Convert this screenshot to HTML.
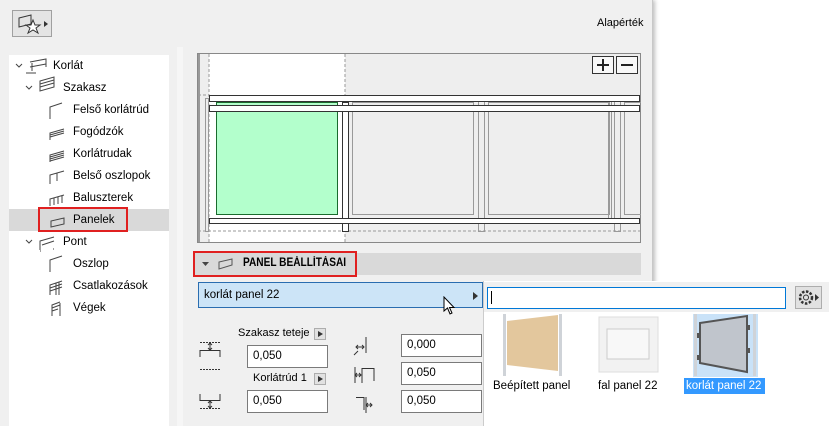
<!DOCTYPE html>
<html><head><meta charset="utf-8"><style>
*{margin:0;padding:0;box-sizing:border-box}
body{width:829px;height:426px;background:#fff;position:relative;overflow:hidden;font-family:"Liberation Sans",sans-serif;font-size:11.5px;color:#000}
.a{position:absolute}
.dlg{left:0;top:0;width:653px;height:426px;background:#f0f0f0;border-right:1px solid #c8c8c8;box-shadow:2px 0 4px rgba(0,0,0,.25)}
.tree{left:9px;top:55px;width:160px;height:371px;background:#fff}
.row{position:absolute;height:22px;line-height:22px;white-space:nowrap}
.inp{position:absolute;width:81px;height:23px;background:#fff;border:1px solid #7a7a7a;padding-left:5px;line-height:21px;font-size:11.5px}
.arr{position:absolute;width:12px;height:12px;background:#e1e1e1;border:1px solid #adadad}
.arr:after{content:"";position:absolute;left:3px;top:2px;border-left:5px solid #333;border-top:3.5px solid transparent;border-bottom:3.5px solid transparent}
</style></head><body>
<div class="a dlg"></div>
<div class="a" style="left:12px;top:10px;width:40px;height:27px;border:1px solid #a0a0a0;background:#e4e4e4"></div>
<svg class="a" style="left:14px;top:12px" width="36" height="24"><path d="M5 6 L17 3 L17 12 L5 15Z" fill="none" stroke="#333"/><path d="M19 8 l2 5 5 0 -4 3 2 5 -5-3 -5 3 2-5 -4-3 5 0z" fill="#fff" stroke="#333"/><path d="M30 9 l4 3 -4 3z" fill="#333"/></svg>
<div class="a" style="left:597px;top:17px;font-size:11px">Alapérték</div>
<div class="a tree"></div>
<div class="a" style="left:177px;top:47px;width:6px;height:379px;background:#f6f6f6"></div>
<div class="a" style="left:9px;top:209px;width:160px;height:22px;background:#d9d9d9"></div>
<div class="a" style="left:38px;top:207px;width:90px;height:25px;border:2px solid #e02020"></div>
<svg class="a" style="left:0;top:55px" width="170" height="265" fill="none" stroke="#444" stroke-width="1">
<path d="M16 9 l3 3 3-3"/><path d="M26 18 h10 M32 8 v8 M30 7 L46 4 v8 M30 12 L46 9"/>
<path d="M26 31 l3 3 3-3"/><path d="M40 26 L54 22 V32 L40 36Z M40 29 L54 25 M40 32 L54 28"/>
<path d="M50 64 V52 L62 48"/>
<path d="M50 85 V78 L64 74 M50 80 L64 76 M50 82 L64 78"/>
<path d="M50 107 V100 L64 96 M50 102 L64 98 M50 104 L64 100 M50 106 L64 102"/>
<path d="M50 129 V120 L64 116 M57 118 V126"/>
<path d="M50 151 V144 L64 140 M54 143 V150 M58 142 V149 M62 141 V148"/>
<path d="M51 172 V166 L64 163 V169 L51 172Z"/>
<path d="M26 185 l3 3 3-3"/><path d="M40 195 V186 L54 182 M40 196 h1 M53 194 h1 M42 190 L54 186"/>
<path d="M50 217 V205 L62 201"/>
<path d="M50 240 V230 L62 226 M50 233 L62 229 M50 236 L62 232 M56 228 V240 M59 227 V240"/>
<path d="M52 261 V250 L60 247 M52 253 L60 250 M52 256 L58 254 M60 248 V261"/>
</svg>
<div class="row" style="left:53px;top:55px">Korlát</div>
<div class="row" style="left:63px;top:77px">Szakasz</div>
<div class="row" style="left:73px;top:99px">Felső korlátrúd</div>
<div class="row" style="left:73px;top:121px">Fogódzók</div>
<div class="row" style="left:73px;top:143px">Korlátrudak</div>
<div class="row" style="left:73px;top:165px">Belső oszlopok</div>
<div class="row" style="left:73px;top:187px">Baluszterek</div>
<div class="row" style="left:73px;top:209px">Panelek</div>
<div class="row" style="left:63px;top:231px">Pont</div>
<div class="row" style="left:73px;top:253px">Oszlop</div>
<div class="row" style="left:73px;top:275px">Csatlakozások</div>
<div class="row" style="left:73px;top:297px">Végek</div>

<svg class="a" style="left:197px;top:53px" width="444" height="190">
<rect x="0.5" y="0.5" width="443" height="189" fill="#eeeeee" stroke="#888"/>
<rect x="1" y="1" width="2" height="188" fill="#999"/>
<rect x="12" y="1" width="136" height="188" fill="#fff"/>
<path d="M12 1 V189 M148 1 V189 M1 42 H12 M1 178 H443" stroke="#999" stroke-dasharray="3 2"/>
<g fill="none" stroke="#999">
<rect x="155.5" y="49.5" width="121" height="112"/><rect x="291.5" y="49.5" width="121" height="112"/><rect x="427.5" y="49.5" width="20" height="112"/>
<rect x="8.5" y="45.5" width="3" height="133"/><rect x="281.5" y="45.5" width="6" height="133"/><rect x="417.5" y="45.5" width="6" height="133"/><rect x="411.5" y="45.5" width="3" height="125"/>
</g>
<rect x="19.5" y="49.5" width="121" height="112" fill="#b3ffcc" stroke="#1a6b2e"/>
<rect x="145.5" y="49.5" width="6" height="129" fill="#fff" stroke="#333"/>
<g fill="#fff" stroke="#333"><rect x="12.5" y="42.5" width="430" height="6"/><rect x="12.5" y="52.5" width="430" height="6"/><rect x="12.5" y="165.5" width="430" height="5"/></g>
<rect x="395.5" y="3.5" width="21" height="17" fill="#f8f8f8" stroke="#333"/><rect x="419.5" y="3.5" width="21" height="17" fill="#f8f8f8" stroke="#333"/>
<path d="M400 12 H412 M406 6 V18 M424 12 H436" stroke="#222" stroke-width="2"/>
</svg>

<div class="a" style="left:193px;top:253px;width:448px;height:22px;background:#d9d9d9"></div>
<div class="a" style="left:193px;top:251px;width:164px;height:26px;border:2px solid #e02020"></div>
<svg class="a" style="left:200px;top:257px" width="40" height="14"><path d="M2 5 h7 l-3.5 4z" fill="#444"/><path d="M19 12 V5 L32 2 V8 L19 12Z" fill="none" stroke="#555"/></svg>
<div class="a" style="left:243px;top:257px;font-weight:bold;font-size:11.5px;transform:scaleX(0.88);transform-origin:left top;white-space:nowrap">PANEL BEÁLLÍTÁSAI</div>
<div class="a" style="left:198px;top:282px;width:285px;height:26px;background:#cce4f7;border:1px solid #2a6db0;padding-left:5px;line-height:24px;font-size:11.5px">korlát panel 22</div>
<div class="a" style="left:473px;top:292px;border-left:5px solid #333;border-top:4px solid transparent;border-bottom:4px solid transparent"></div>
<svg class="a" style="left:443px;top:296px" width="14" height="20"><path d="M1 1 V15 L4.5 12 L7 18 L9 17 L6.5 11.5 H11Z" fill="#fff" stroke="#000"/></svg>

<div class="a" style="left:238px;top:327px;font-size:11px">Szakasz teteje</div><div class="arr" style="left:314px;top:328px"></div>
<div class="a" style="left:253px;top:372px;font-size:11px">Korlátrúd 1</div><div class="arr" style="left:314px;top:373px"></div>
<div class="inp" style="left:247px;top:345px">0,050</div>
<div class="inp" style="left:247px;top:390px">0,050</div>
<div class="inp" style="left:401px;top:334px">0,000</div>
<div class="inp" style="left:401px;top:362px">0,050</div>
<div class="inp" style="left:401px;top:390px">0,050</div>
<svg class="a" style="left:198px;top:335px" width="200" height="85" fill="none" stroke="#333">
<path d="M2 7.5 H22 M2 34.5 H22" stroke-dasharray="2 1"/><path d="M2 22 V15.5 H22 V22 M12 8 V15 M10 10 l2-2 2 2 M10 13 l2 2 2-2"/>
<path d="M2 59 V65.5 H22 V59 M12 66 V73 M10 68 l2-2 2 2 M10 71 l2 2 2-2"/><path d="M2 73.5 H22" stroke-dasharray="2 1"/>
<path d="M168 2 V18 M158 12 H166 M160 10 l-2 2 2 2 M164 10 l2 2-2 2 M156 20 l4-4"/>
<path d="M164 33.5 H176 V46 M164 33 V48 M157 40 H163 M159 38 l-2 2 2 2 M161 38 l2 2-2 2 M157 32 V48" />
<path d="M158 62.5 H166 V75 M168 62 V78 M168 70 H174 M170 68 l-2 2 2 2 M172 68 l2 2-2 2"/>
</svg>

<div class="a" style="left:483px;top:281px;width:346px;height:145px;background:#fff;border-left:1px solid #ccc"></div>
<div class="a" style="left:484px;top:282px;width:345px;height:30px;background:#f0f0f0"></div>
<div class="a" style="left:487px;top:287px;width:299px;height:22px;background:#fff;border:1px solid #0078d7"></div>
<div class="a" style="left:491px;top:291px;width:1px;height:13px;background:#000"></div>
<div class="a" style="left:795px;top:286px;width:27px;height:23px;background:#e1e1e1;border:1px solid #adadad"></div>
<svg class="a" style="left:797px;top:288px" width="24" height="20"><circle cx="9" cy="9.5" r="2.5" fill="none" stroke="#333"/><circle cx="9" cy="9.5" r="6" fill="none" stroke="#333" stroke-dasharray="2.5 1.5" stroke-width="2.5"/><path d="M18 6 l4 3.5 -4 3.5z" fill="#333"/></svg>
<svg class="a" style="left:500px;top:313px" width="270" height="64">
<rect x="3" y="1" width="3" height="62" fill="#cfd3d8"/><rect x="59" y="1" width="3" height="62" fill="#cfd3d8"/>
<path d="M7 8 L58 2 V58 L7 52Z" fill="#e3c79d"/>
<path d="M99 4 H158 V59 H99Z" fill="#f2f2f2" stroke="#ddd"/><rect x="107" y="16" width="42" height="30" fill="#f8f8f8" stroke="#ccc"/>
<rect x="193" y="1" width="65" height="63" fill="#c9e2f8"/>
<rect x="194" y="1" width="3" height="62" fill="#cfd3d8"/><rect x="253" y="1" width="3" height="62" fill="#cfd3d8"/>
<path d="M200 10 L247 3 V59 L200 50Z" fill="#c0c5cc" stroke="#555" stroke-width="2"/>
<rect x="197" y="20" width="3" height="5" fill="#555"/><rect x="197" y="42" width="3" height="5" fill="#555"/><rect x="247" y="12" width="3" height="5" fill="#555"/><rect x="247" y="35" width="3" height="5" fill="#555"/>
</svg>
<div class="a" style="left:493px;top:380px;font-size:11.5px">Beépített panel</div>
<div class="a" style="left:598px;top:380px;font-size:11.5px">fal panel 22</div>
<div class="a" style="left:684px;top:378px;width:81px;height:16px;background:#3399ff;color:#fff;font-size:11.5px;line-height:16px;padding-left:2px">korlát panel 22</div>
</body></html>
